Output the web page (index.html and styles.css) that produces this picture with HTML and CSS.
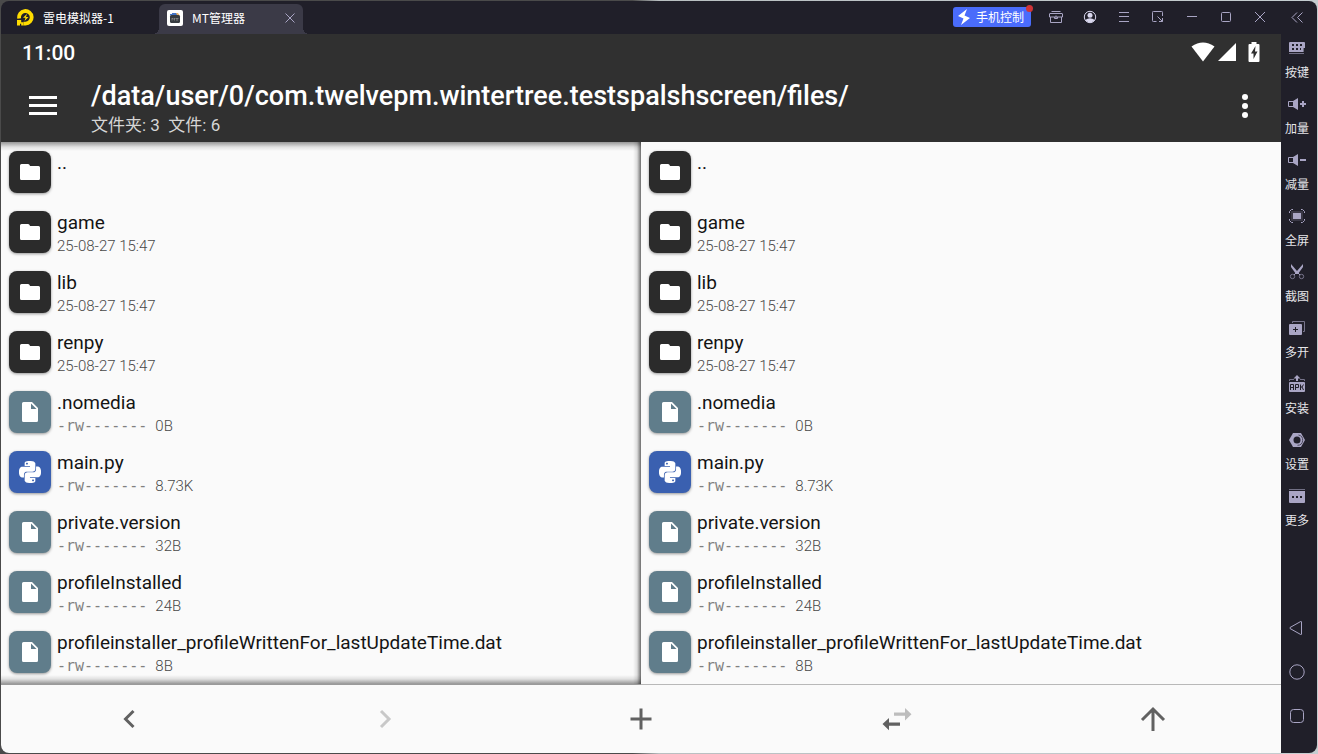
FILE: index.html
```html
<!DOCTYPE html>
<html lang="zh-CN">
<head>
<meta charset="utf-8">
<title>MT管理器</title>
<link rel="stylesheet" href="styles.css">
</head>
<body>
<svg class="defs" aria-hidden="true">
  <symbol id="folder" viewBox="0 0 20 16"><path d="M1.5 0h6.5q.8 0 1.2.6l.9 1.4H18.5a1.5 1.5 0 0 1 1.5 1.5v11a1.5 1.5 0 0 1-1.500 1.500h-17A1.500 1.500 0 0 1 0 14.500V1.500A1.500 1.500 0 0 1 1.500 0z" fill="#fff"/></symbol>
  <symbol id="file" viewBox="0 0 16 20"><path d="M1.500 0H10l6 6v12.500a1.500 1.500 0 0 1-1.500 1.500h-13A1.500 1.500 0 0 1 0 18.500v-17A1.500 1.500 0 0 1 1.500 0zM9 1.500V7h5.500z" fill="#fff" fill-rule="evenodd"/></symbol>
  <symbol id="python" viewBox="0 0 24 24"><g fill="#fff"><path id="snake" d="M14.250.18l.9.200.730.260.590.300.450.320.340.340.250.340.160.330.100.300.040.260.020.200-.010.130V8.500l-.050.630-.130.550-.210.460-.260.380-.300.310-.330.250-.350.190-.350.140-.330.100-.300.070-.260.040-.210.020H8.770l-.690.050-.590.140-.500.220-.410.270-.330.320-.270.350-.200.360-.150.370-.100.350-.070.320-.040.270-.020.210v3.060H3.170l-.210-.030-.280-.070-.320-.120-.350-.180-.360-.260-.360-.360-.350-.460-.320-.590-.280-.730-.210-.880-.140-1.050-.050-1.230.060-1.220.160-1.040.240-.870.320-.710.360-.570.400-.440.420-.330.420-.240.400-.160.360-.100.320-.050.240-.010h.160l.060.010h8.160v-.830H6.180l-.010-2.750-.020-.370.050-.340.110-.310.170-.280.250-.260.310-.230.380-.200.440-.180.510-.150.580-.120.640-.100.710-.060.770-.040.840-.020 1.270.050zm-6.300 1.980l-.230.330-.080.410.080.410.230.340.330.220.410.090.410-.090.330-.220.230-.340.080-.410-.080-.410-.230-.330-.330-.220-.410-.090-.410.090z"/><use href="#snake" transform="rotate(180 12 12)"/></g></symbol>
</svg>

<div class="window">
  <header class="titlebar">
    <div class="tab tab-home">
      <svg class="i17" viewBox="0 0 17 17"><path d="M2.200 9.500A6.300 6.300 0 1 1 8.500 14.600H6.500" fill="none" stroke="#ffdc00" stroke-width="3.800"/><path d="M0 11h4.200v2.200H6.500v3.300H4.200V14.800H3v1.700H0z" fill="#ffdc00"/><path d="M10 4.800L6 8.800h2.500L7.500 12 11.500 8H9z" fill="#ffdc00"/></svg>
      <span>雷电模拟器-1</span>
    </div>
    <div class="tab tab-active">
      <svg class="i16" viewBox="0 0 16 16"><rect width="16" height="16" rx="2" fill="#fff"/><path d="M3 5.500V4h4l1 1.500z" fill="#4374c6"/><path d="M7 3h4l2 3H8z" fill="#e9b36b"/><path d="M5 3h4l1 2H5z" fill="#4374c6"/><rect x="3" y="5" width="10" height="8" rx="1.500" fill="#363b40"/><path d="M5 10.500v-2.500l1.300 1.300L7.500 8v2.500M8.500 8.500h3M10 8.500v2.500" fill="none" stroke="#8a8a8a" stroke-width=".8"/></svg>
      <span>MT管理器</span>
      <button class="plain tab-close" aria-label="关闭标签"><svg class="i10" viewBox="0 0 10 10"><path d="M.5.5l9 9m0-9l-9 9" class="thin"/></svg></button>
    </div>
    <button class="phone"><svg class="bolt" viewBox="0 0 14 16"><path d="M10 0L1 7l5.500 2.500L4 16l9-7-5.500-2.500z" fill="#fff"/></svg><span>手机控制</span><i class="dot"></i></button>
    <nav class="controls">
      <button class="plain" aria-label="礼包"><svg class="i14" viewBox="0 0 14 14"><path d="M2.500 1.500h9M1 3.500h12a.5.5 0 0 1 .5.5v3H.5V4A.5.5 0 0 1 1 3.500zM1.500 7v5.500h11V7M5.500 7v1.500h3V7M7 5.500v2" class="thin"/></svg></button>
      <button class="plain" aria-label="账户"><svg class="i14" viewBox="0 0 14 14"><circle cx="7" cy="7" r="5.700" class="thin bright"/><circle cx="7" cy="5.200" r="2.500" fill="#d9d7ee"/><path d="M2.200 10Q7 6.500 11.800 10A6 6 0 0 1 2.200 10z" fill="#d9d7ee"/></svg></button>
      <button class="plain" aria-label="菜单"><svg class="i14" viewBox="0 0 14 14"><path d="M2 2.500h10M2 6.500h10M2 11.500h10" class="thin"/></svg></button>
      <button class="plain" aria-label="小窗"><svg class="i14" viewBox="0 0 14 14"><path d="M5.500 11.500h-3a.9.9 0 0 1-1-1V2.500a.9.9 0 0 1 1-1h8a.9.9 0 0 1 1 1V6M6.500 6.500l5 5M11.500 8v3.500H8" class="thin"/></svg></button>
      <button class="plain" aria-label="最小化"><svg class="i14" viewBox="0 0 14 14"><path d="M2 6.500h10" class="thin"/></svg></button>
      <button class="plain" aria-label="最大化"><svg class="i14" viewBox="0 0 14 14"><rect x="2.500" y="2.500" width="9" height="9" rx="1" class="thin"/></svg></button>
      <button class="plain" aria-label="关闭"><svg class="i14" viewBox="0 0 14 14"><path d="M2 2l10 10M12 2L2 12" class="thin"/></svg></button>
      <button class="plain collapse" aria-label="收起"><svg class="i14" viewBox="0 0 14 14"><path d="M7 2.500L2 7.500l5 5M12.500 2.500l-5 5 5 5" class="thin"/></svg></button>
    </nav>
  </header>

  <div class="body">
    <main class="android">
      <div class="status">
        <span class="clock">11:00</span>
        <svg class="wifi" viewBox="0 0 24 20"><path d="M12 19.500L.5 4.500Q12-3.500 23.500 4.500z" fill="#fff"/></svg>
        <svg class="signal" viewBox="0 0 18 18"><path d="M18 0v18H0z" fill="#fff"/></svg>
        <svg class="battery" viewBox="0 0 12 20"><path d="M3.500 2V0h5v2H10.500a1 1 0 0 1 1 1v16a1 1 0 0 1-1 1h-9a1 1 0 0 1-1-1V3a1 1 0 0 1 1-1zM7.500 4L3 11.500h2.500V17L9.500 9.500H7z" fill="#fff" fill-rule="evenodd"/></svg>
      </div>
      <div class="appbar">
        <button class="plain burger" aria-label="菜单"><svg viewBox="0 0 28 20"><path d="M0 0h28v3H0zM0 8h28v3H0zM0 16h28v3H0z" fill="#fff"/></svg></button>
        <div class="heading"><h1>/data/user/0/com.twelvepm.wintertree.testspalshscreen/files/</h1><p>文件夹: 3&nbsp; 文件: 6</p></div>
        <button class="plain kebab" aria-label="更多选项"><svg viewBox="0 0 6 24"><g fill="#fff"><circle cx="3" cy="3" r="3"/><circle cx="3" cy="12" r="3"/><circle cx="3" cy="21" r="3"/></g></svg></button>
      </div>
      <div class="panes">
        <ul class="pane pane-left">
          <li><button class="row"><span class="tile dark"><svg class="fo"><use href="#folder"/></svg></span><span class="info"><span class="name">..</span><span class="meta">&nbsp;</span></span></button></li>
          <li><button class="row"><span class="tile dark"><svg class="fo"><use href="#folder"/></svg></span><span class="info"><span class="name">game</span><span class="meta">25-08-27 15:47</span></span></button></li>
          <li><button class="row"><span class="tile dark"><svg class="fo"><use href="#folder"/></svg></span><span class="info"><span class="name">lib</span><span class="meta">25-08-27 15:47</span></span></button></li>
          <li><button class="row"><span class="tile dark"><svg class="fo"><use href="#folder"/></svg></span><span class="info"><span class="name">renpy</span><span class="meta">25-08-27 15:47</span></span></button></li>
          <li><button class="row"><span class="tile"><svg class="fi"><use href="#file"/></svg></span><span class="info"><span class="name">.nomedia</span><span class="meta"><code>-rw-------</code>0B</span></span></button></li>
          <li><button class="row"><span class="tile blue"><svg class="py"><use href="#python"/></svg></span><span class="info"><span class="name">main.py</span><span class="meta"><code>-rw-------</code>8.73K</span></span></button></li>
          <li><button class="row"><span class="tile"><svg class="fi"><use href="#file"/></svg></span><span class="info"><span class="name">private.version</span><span class="meta"><code>-rw-------</code>32B</span></span></button></li>
          <li><button class="row"><span class="tile"><svg class="fi"><use href="#file"/></svg></span><span class="info"><span class="name">profileInstalled</span><span class="meta"><code>-rw-------</code>24B</span></span></button></li>
          <li><button class="row"><span class="tile"><svg class="fi"><use href="#file"/></svg></span><span class="info"><span class="name">profileinstaller_profileWrittenFor_lastUpdateTime.dat</span><span class="meta"><code>-rw-------</code>8B</span></span></button></li>
        </ul>
        <ul class="pane">
          <li><button class="row"><span class="tile dark"><svg class="fo"><use href="#folder"/></svg></span><span class="info"><span class="name">..</span><span class="meta">&nbsp;</span></span></button></li>
          <li><button class="row"><span class="tile dark"><svg class="fo"><use href="#folder"/></svg></span><span class="info"><span class="name">game</span><span class="meta">25-08-27 15:47</span></span></button></li>
          <li><button class="row"><span class="tile dark"><svg class="fo"><use href="#folder"/></svg></span><span class="info"><span class="name">lib</span><span class="meta">25-08-27 15:47</span></span></button></li>
          <li><button class="row"><span class="tile dark"><svg class="fo"><use href="#folder"/></svg></span><span class="info"><span class="name">renpy</span><span class="meta">25-08-27 15:47</span></span></button></li>
          <li><button class="row"><span class="tile"><svg class="fi"><use href="#file"/></svg></span><span class="info"><span class="name">.nomedia</span><span class="meta"><code>-rw-------</code>0B</span></span></button></li>
          <li><button class="row"><span class="tile blue"><svg class="py"><use href="#python"/></svg></span><span class="info"><span class="name">main.py</span><span class="meta"><code>-rw-------</code>8.73K</span></span></button></li>
          <li><button class="row"><span class="tile"><svg class="fi"><use href="#file"/></svg></span><span class="info"><span class="name">private.version</span><span class="meta"><code>-rw-------</code>32B</span></span></button></li>
          <li><button class="row"><span class="tile"><svg class="fi"><use href="#file"/></svg></span><span class="info"><span class="name">profileInstalled</span><span class="meta"><code>-rw-------</code>24B</span></span></button></li>
          <li><button class="row"><span class="tile"><svg class="fi"><use href="#file"/></svg></span><span class="info"><span class="name">profileinstaller_profileWrittenFor_lastUpdateTime.dat</span><span class="meta"><code>-rw-------</code>8B</span></span></button></li>
        </ul>
      </div>
      <nav class="toolbar">
        <button class="plain" aria-label="后退"><svg class="i32" viewBox="0 0 32 32"><path d="M20.500 8l-8 8 8 8" class="thick"/></svg></button>
        <button class="plain" aria-label="前进" disabled><svg class="i32" viewBox="0 0 32 32"><path d="M12 8l8 8-8 8" class="thick light"/></svg></button>
        <button class="plain" aria-label="新建"><svg class="i32" viewBox="0 0 32 32"><path d="M16 5.500v21M5.500 16h21" class="thick"/></svg></button>
        <button class="plain" aria-label="同步路径"><svg class="i32" viewBox="0 0 32 32"><path d="M13 9.500h11V5l6.500 6.200-6.500 6.200v-4.700H13z" fill="#bdbdbd"/><path d="M19 19.500v3.200H8v4.600l-6.500-6.200L8 14.900v4.600z" fill="#616161"/></svg></button>
        <button class="plain" aria-label="上级目录"><svg class="i32" viewBox="0 0 32 32"><path d="M16 28V6M5 17L16 6l11 11" class="thick"/></svg></button>
      </nav>
    </main>

    <aside class="side">
      <nav class="tools">
        <button class="plain"><svg class="i18" viewBox="0 0 18 18"><path d="M2 3h14a1 1 0 0 1 1 1v5h-2v4H1V4a1 1 0 0 1 1-1z" fill="#a9a5c4"/><path d="M4 5h2v2H4zM8 5h2v2H8zM12 5h2v2h-2zM4 9h2v2H4zM8 9h2v2H8zM12 9h1v2h-1z" fill="#201f29"/><path d="M1 14.500h15" stroke="#716f84"/><path d="M15.500 9v4" stroke="#716f84"/></svg>按键</button>
        <button class="plain"><svg class="i18" viewBox="0 0 18 18"><path d="M5.500 6.500h-5v5h5" class="thin"/><path d="M5 6l5-3v12l-5-3zM12 8h2V6h2v2h2v2h-2v2h-2v-2h-2z" fill="#a9a5c4"/></svg>加量</button>
        <button class="plain"><svg class="i18" viewBox="0 0 18 18"><path d="M5.500 6.500h-5v5h5" class="thin"/><path d="M5 6l5-3v12l-5-3zM12 8h6v2h-6z" fill="#a9a5c4"/></svg>减量</button>
        <button class="plain"><svg class="i18" viewBox="0 0 18 18"><path d="M1.500 6V4.500l2-2H5M13 2.500h1.500l2 2V6M16.500 12v1.500l-2 2H13M5 15.500H3.500l-2-2V12" class="thin"/><rect x="3" y="4" width="12" height="10" fill="#3a3846"/><rect x="5" y="6" width="8" height="6" fill="#a9a5c4"/></svg>全屏</button>
        <button class="plain"><svg class="i18" viewBox="0 0 18 18"><path d="M3 1l6 7 6-7v3l-5 7H8L3 4z" fill="#a9a5c4"/><path d="M8 10l-2 2M10 10l2 2" class="thin"/><circle cx="4.500" cy="13.500" r="2.200" class="thin dim"/><circle cx="13.500" cy="13.500" r="2.200" class="thin dim"/></svg>截图</button>
        <button class="plain"><svg class="i18" viewBox="0 0 18 18"><path d="M4.500 4V2.500h12v10H15" class="thin dim"/><rect x="1" y="5" width="13" height="11" rx="1" fill="#a9a5c4"/><path d="M7.500 8v5M5 10.500h5" stroke="#201f29"/></svg>多开</button>
        <button class="plain"><svg class="i18" viewBox="0 0 18 18"><path d="M9 0l3.500 3.500H10V6H8V3.500H5.500z" fill="#a9a5c4"/><path d="M1.500 6V4.500H6M12 4.500h4.500V6" class="thin dim"/><rect x="1" y="7" width="16" height="10" rx="1" fill="#a9a5c4"/><path d="M2.500 15v-5.500h3V15m-3-2.500h3M7.500 15V9.500h3v3h-3M12.500 9.500V15m0-3h1.500l1.500-2.500M14 12l1.500 3" fill="none" stroke="#201f29"/></svg>安装</button>
        <button class="plain"><svg class="i18" viewBox="0 0 18 18"><path d="M5 2h8l4 7-4 7H5L1 9z" fill="#a9a5c4"/><circle cx="9" cy="9" r="3.500" fill="#201f29"/><path d="M10.500 4a5.200 5.200 0 0 1-1 10.300" fill="none" stroke="#4b485b"/></svg>设置</button>
        <button class="plain"><svg class="i18" viewBox="0 0 18 18"><path d="M1 2.500h16" stroke="#716f84"/><path d="M1 4h16v11a1 1 0 0 1-1 1H2a1 1 0 0 1-1-1z" fill="#a9a5c4"/><path d="M4 9h2v2H4zM8 9h2v2H8zM12 9h2v2h-2z" fill="#201f29"/></svg>更多</button>
      </nav>
      <nav class="keys">
        <button class="plain" aria-label="返回"><svg class="i18" viewBox="0 0 18 18"><path d="M13.500 3v12q0 .8-.8.5L2 9.500q-.7-.5 0-1L12.700 2.500q.8-.3.8.5z" class="thin"/></svg></button>
        <button class="plain" aria-label="主页"><svg class="i18" viewBox="0 0 18 18"><circle cx="9" cy="9" r="7.200" class="thin"/></svg></button>
        <button class="plain" aria-label="最近任务"><svg class="i18" viewBox="0 0 18 18"><rect x="2.500" y="2.500" width="13" height="13" rx="3" class="thin"/></svg></button>
      </nav>
    </aside>
  </div>
</div>
</body>
</html>
```
FILE: styles.css
```css
* { box-sizing: border-box; }
body {
  margin: 0;
  height: 100vh;
  padding: 1px;
  background: linear-gradient(90deg, #4a4a4a 48%, #b9bfc1 50%, #c5cdd0);
  font-family: Roboto, "Noto Sans CJK SC", sans-serif;
}
.defs { position: absolute; width: 0; height: 0; }
svg { display: block; flex: none; }
.plain {
  display: flex;
  align-items: center;
  justify-content: center;
  margin: 0;
  padding: 0;
  border: 0;
  background: none;
  font: inherit;
  color: inherit;
}
.thin { fill: none; stroke: #a9a5c4; stroke-width: 1; }
.dim { stroke: #77748b; }
.bright { stroke: #d9d7ee; }
.i10 { width: 10px; height: 10px; }
.i14 { width: 14px; height: 14px; }
.i16 { width: 16px; height: 16px; }
.i17 { width: 17px; height: 17px; }
.i18 { width: 18px; height: 18px; }
.i32 { width: 32px; height: 32px; }

.window {
  display: flex;
  flex-direction: column;
  height: 100%;
  border-radius: 8px;
  overflow: hidden;
  background: #201f29;
}
.titlebar {
  display: flex;
  align-items: stretch;
  height: 33px;
  flex: none;
  color: #fff;
  font: 12px/16px "Noto Sans CJK SC", sans-serif;
}
.tab { display: flex; align-items: center; gap: 9px; }
.tab-home { width: 158px; padding-left: 16px; }
.tab-active {
  position: relative;
  width: 144px;
  margin-top: 3px;
  padding: 0 8px 2px;
  border-radius: 6px 6px 0 0;
  background: #3b3a47;
}
.tab-active::before, .tab-active::after {
  content: "";
  position: absolute;
  bottom: 0;
  width: 6px;
  height: 6px;
}
.tab-active::before { right: 100%; background: radial-gradient(circle at 0 0, transparent 6px, #3b3a47 6px); }
.tab-active::after { left: 100%; background: radial-gradient(circle at 100% 0, transparent 6px, #3b3a47 6px); }
.tab-close { margin-left: auto; }
.phone {
  position: relative;
  display: flex;
  align-items: center;
  gap: 5px;
  height: 20px;
  margin: 6px 8px 0 auto;
  padding: 0 7px 0 4px;
  border: 0;
  border-radius: 3px;
  background: #4a6cfb;
  color: #fff;
  font: 12px/16px "Noto Sans CJK SC", sans-serif;
}
.bolt { width: 14px; height: 16px; }
.dot {
  position: absolute;
  top: -2px;
  right: -2px;
  width: 7px;
  height: 7px;
  border-radius: 50%;
  background: #d03438;
}
.controls { display: flex; padding-bottom: 1px; }
.controls .plain { width: 34px; }
.controls .collapse { width: 40px; }

.body { display: flex; flex: 1; min-height: 0; }
.android {
  display: flex;
  flex-direction: column;
  flex: 1;
  min-width: 0;
  background: #fafafa;
}
.status {
  display: flex;
  align-items: center;
  height: 36px;
  padding: 0 21px;
  background: #303030;
  color: #fff;
}
.clock { flex: 1; padding-top: 2px; font-size: 21px; line-height: 24px; font-weight: 500; }
.wifi { width: 24px; height: 20px; }
.signal { width: 18px; height: 18px; margin: 0 12px 0 3px; }
.battery { width: 12px; height: 20px; }
.appbar {
  display: flex;
  align-items: center;
  height: 72px;
  padding: 0 33px 0 28px;
  background: #303030;
  color: #fff;
}
.burger svg { width: 28px; height: 20px; }
.kebab svg { width: 6px; height: 24px; }
.heading { flex: 1; min-width: 0; padding: 6px 0 0 34px; }
.heading h1 { margin: 0; font-size: 27px; line-height: 32px; font-weight: 500; }
.heading p { margin: 0; font-size: 17px; line-height: 26px; color: #d6d6d6; }

.panes {
  display: grid;
  grid-template-columns: 1fr 1fr;
  flex: 1;
  min-height: 0;
  overflow: hidden;
}
.pane { margin: 0; padding: 0; list-style: none; min-width: 0; border-bottom: 1px solid #b8b8b8; }
.pane-left {
  background:
    linear-gradient(#00000066, #0000001a 5px, #0000 9px) top / 100% 9px no-repeat,
    linear-gradient(0deg, #00000066, #0000001a 5px, #0000 9px) bottom / 100% 9px no-repeat,
    linear-gradient(270deg, #00000090, #0000001c 4px, #0000 8px) right / 8px 100% no-repeat;
  border-bottom-color: #9a9a9a;
}
.row {
  display: flex;
  align-items: center;
  gap: 6px;
  width: 100%;
  height: 60px;
  padding: 0 8px;
  border: 0;
  background: none;
  font-family: inherit;
  text-align: left;
}
.tile {
  display: flex;
  align-items: center;
  justify-content: center;
  flex: none;
  width: 42px;
  height: 42px;
  border-radius: 8px;
  background: #607d8b;
  box-shadow: 0 1px 3px #0006;
}
.dark { background: #2b2b2b; }
.blue { background: #3a60b0; }
.fo { width: 20px; height: 16px; }
.fi { width: 16px; height: 20px; }
.py { width: 22px; height: 22px; }
.info { display: flex; flex-direction: column; min-width: 0; padding-top: 3px; }
.name { font-size: 19px; line-height: 25px; color: #141414; white-space: nowrap; }
.meta { font-size: 15px; line-height: 22px; font-weight: 300; color: #484848; white-space: nowrap; }
.meta code { margin-right: 8px; font: 15px/1 "DejaVu Sans Mono", monospace; color: #808080; }

.toolbar { display: grid; grid-template-columns: repeat(5, 1fr); height: 68px; flex: none; }
.thick { fill: none; stroke: #616161; stroke-width: 3; }
.light { stroke: #c8c8c8; }

.side {
  display: flex;
  flex-direction: column;
  justify-content: space-between;
  width: 36px;
  padding: 5px 4px 28px 0;
  color: #e6e6ea;
  font: 12px/18px "Noto Sans CJK SC", sans-serif;
}
.tools { display: flex; flex-direction: column; gap: 14px; }
.tools .plain { flex-direction: column; gap: 6px; height: 42px; }
.keys { display: flex; flex-direction: column; gap: 26px; }
```
